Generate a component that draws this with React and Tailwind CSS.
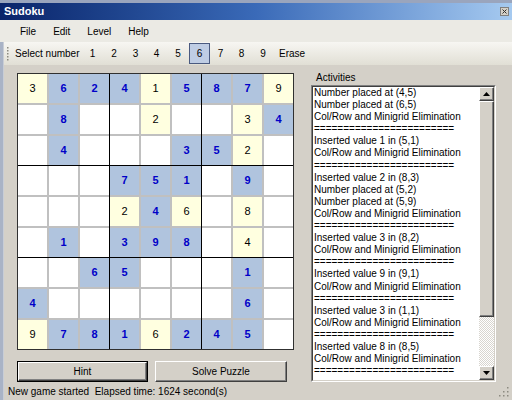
import React from 'react';

const board = [
  ['3y', '6b', '2b', '4b', '1y', '5b', '8b', '7b', '9y'],
  ['.', '8b', '.', '.', '2y', '.', '.', '3y', '4b'],
  ['.', '4b', '.', '.', '.', '3b', '5b', '2y', '.'],
  ['.', '.', '.', '7b', '5b', '1b', '.', '9b', '.'],
  ['.', '.', '.', '2y', '4b', '6y', '.', '8y', '.'],
  ['.', '1b', '.', '3b', '9b', '8b', '.', '4y', '.'],
  ['.', '.', '6b', '5b', '.', '.', '.', '1b', '.'],
  ['4b', '.', '.', '.', '.', '.', '.', '6b', '.'],
  ['9y', '7b', '8b', '1b', '6y', '2b', '4b', '5b', '.'],
];

const SEP = '========================';

const activities = [
  'Number placed at (4,5)',
  'Number placed at (6,5)',
  'Col/Row and Minigrid Elimination',
  SEP,
  'Inserted value 1 in (5,1)',
  'Col/Row and Minigrid Elimination',
  SEP,
  'Inserted value 2 in (8,3)',
  'Number placed at (5,2)',
  'Number placed at (5,9)',
  'Col/Row and Minigrid Elimination',
  SEP,
  'Inserted value 3 in (8,2)',
  'Col/Row and Minigrid Elimination',
  SEP,
  'Inserted value 9 in (9,1)',
  'Col/Row and Minigrid Elimination',
  SEP,
  'Inserted value 3 in (1,1)',
  'Col/Row and Minigrid Elimination',
  SEP,
  'Inserted value 8 in (8,5)',
  'Col/Row and Minigrid Elimination',
  SEP,
];

// toolbar number buttons, widths picked to land on the reference's pixels
const numberButtons = [
  { label: '1', w: 'w-[21px]' },
  { label: '2', w: 'w-[22px]' },
  { label: '3', w: 'w-[21px]' },
  { label: '4', w: 'w-[21px]' },
  { label: '5', w: 'w-[22px]' },
  { label: '6', w: 'w-[21px]', selected: true },
  { label: '7', w: 'w-[21px]' },
  { label: '8', w: 'w-[21px]' },
  { label: '9', w: 'w-[22px]' },
];

const Cell = ({ value }) => {
  if (value === '.') return <div className="w-[29px] h-[29px] bg-white" />;
  const digit = value[0];
  if (value[1] === 'y') {
    return (
      <div className="w-[29px] h-[29px] bg-[#ffffe0] flex items-center justify-center text-[11px] text-black">
        {digit}
      </div>
    );
  }
  return (
    <div className="w-[29px] h-[29px] bg-[#b0c4de] flex items-center justify-center text-[11px] font-bold text-[#0000c8]">
      {digit}
    </div>
  );
};

const Block = ({ br, bc }) => {
  const cells = [];
  for (let r = 0; r < 3; r++) {
    for (let c = 0; c < 3; c++) {
      cells.push(<Cell key={`${r}-${c}`} value={board[br * 3 + r][bc * 3 + c]} />);
    }
  }
  return <div className="grid grid-cols-3 gap-[2px] bg-[#c0c0c0]">{cells}</div>;
};

const Board = () => (
  <div className="border border-[#303030] bg-black w-[277px] h-[277px] flex flex-col">
    {[0, 1, 2].map((br) => (
      <React.Fragment key={br}>
        {br > 0 && <div className="h-px bg-black" />}
        <div className="flex">
          {[0, 1, 2].map((bc) => (
            <React.Fragment key={bc}>
              {bc > 0 && <div className="w-px bg-black" />}
              <Block br={br} bc={bc} />
            </React.Fragment>
          ))}
        </div>
      </React.Fragment>
    ))}
  </div>
);

const raised =
  'border border-t-white border-l-white border-b-[#404040] border-r-[#404040] shadow-[inset_-1px_-1px_0_#808080]';

const ScrollButton = ({ up }) => (
  <div className={`w-[15px] h-[14px] bg-[#d4d0c8] flex items-center justify-center ${raised}`}>
    <svg width="7" height="4" viewBox="0 0 7 4">
      {up ? <path d="M3.5 0 L7 4 L0 4 Z" fill="#000" /> : <path d="M0 0 L7 0 L3.5 4 Z" fill="#000" />}
    </svg>
  </div>
);

const App = () => {
  return (
    <div className="w-[512px] h-[400px] overflow-hidden bg-[#d4d0c8] font-['Liberation_Sans',Arial,sans-serif] text-[10px] text-black flex flex-col">
      {/* window frame top + title bar */}
      <div className="h-[3px] bg-[#9aa5bd]" />
      <div className="h-[17px] flex items-center bg-gradient-to-r from-[#0a246a] via-[#3a6ab8] to-[#a6caf0] pl-[4px] pr-[3px]">
        <span className="text-white font-bold text-[11px]">Sudoku</span>
        <div className="ml-auto w-[9px] h-[9px] bg-[#d4d0c8] border border-[#808080] flex items-center justify-center">
          <svg width="5" height="5" viewBox="0 0 5 5">
            <path d="M0.5 0.5 L4.5 4.5 M4.5 0.5 L0.5 4.5" stroke="#303030" strokeWidth="1" />
          </svg>
        </div>
      </div>

      {/* menu bar */}
      <div className="h-[22px] bg-[#ebeae4] flex items-center pl-[20px] gap-[17px]">
        <span>File</span>
        <span>Edit</span>
        <span>Level</span>
        <span>Help</span>
      </div>

      <div className="flex flex-1">
        <div className="w-[4px] bg-[#a9b3c6] border-r border-[#c8cdd6]" />
        <div className="flex-1 flex flex-col">
          {/* toolbar */}
          <div className="h-[23px] flex items-center bg-gradient-to-b from-[#f7f6f2] to-[#e1dfd5]">
            <svg width="3" height="16" viewBox="0 0 3 16" className="ml-[2px]">
              {[1, 4, 7, 10, 13].map((y) => (
                <rect key={y} x="1" y={y} width="1.5" height="1.5" fill="#8c8a80" />
              ))}
            </svg>
            <span className="ml-[6px] w-[67px]">Select number</span>
            {numberButtons.map((b) =>
              b.selected ? (
                <div
                  key={b.label}
                  className={`${b.w} h-[21px] flex items-center justify-center border border-[#4a5a80] bg-[#bfcde4]`}
                >
                  {b.label}
                </div>
              ) : (
                <div key={b.label} className={`${b.w} h-[21px] flex items-center justify-center`}>
                  {b.label}
                </div>
              )
            )}
            <span className="pl-[5px]">Erase</span>
          </div>

          {/* main */}
          <div className="flex-1 flex">
            <div className="pl-[13px] pt-[8px] flex flex-col">
              <Board />
              <div className="mt-[11px] flex gap-[7px]">
                <div className="w-[131px] h-[21px] border border-black bg-[#d4d0c8] flex items-center justify-center">
                  <div className={`w-full h-full flex items-center justify-center ${raised}`}>Hint</div>
                </div>
                <div className={`w-[132px] h-[21px] bg-[#d4d0c8] flex items-center justify-center ${raised}`}>
                  Solve Puzzle
                </div>
              </div>
            </div>

            <div className="ml-[17px] pt-[5px] flex flex-col">
              <div className="h-[15px] pl-[5px] flex items-center">Activities</div>
              <div className="w-[185px] h-[297px] border border-t-[#808080] border-l-[#808080] border-b-white border-r-white">
                <div className="w-full h-full bg-white border border-t-[#404040] border-l-[#404040] border-b-[#d4d0c8] border-r-[#d4d0c8] flex">
                  <div className="flex-1 pl-px overflow-hidden">
                    {activities.map((line, i) => (
                      <div key={i} className="leading-[12.1px] h-[12.1px] whitespace-nowrap">
                        {line}
                      </div>
                    ))}
                  </div>
                  <div className="w-[15px] flex flex-col">
                    <ScrollButton up />
                    <div className="flex-1 flex flex-col bg-[repeating-conic-gradient(#ffffff_0_25%,#d8d5cf_0_50%)] bg-[length:2px_2px]">
                      <div className={`h-[216px] bg-[#d4d0c8] ${raised}`} />
                    </div>
                    <ScrollButton />
                  </div>
                </div>
              </div>
            </div>
          </div>

          {/* status bar */}
          <div className="h-[17px] flex items-center pl-[4px] pr-[3px]">
            <span className="whitespace-pre">New game started  Elapsed time: 1624 second(s)</span>
            <svg width="11" height="11" viewBox="0 0 11 11" className="ml-auto">
              {[
                [9, 1],
                [9, 5],
                [5, 5],
                [9, 9],
                [5, 9],
                [1, 9],
              ].map(([x, y]) => (
                <rect key={`${x}-${y}`} x={x} y={y} width="1.5" height="1.5" fill="#8c8a80" />
              ))}
            </svg>
          </div>
        </div>
      </div>
    </div>
  );
};

export default App;
